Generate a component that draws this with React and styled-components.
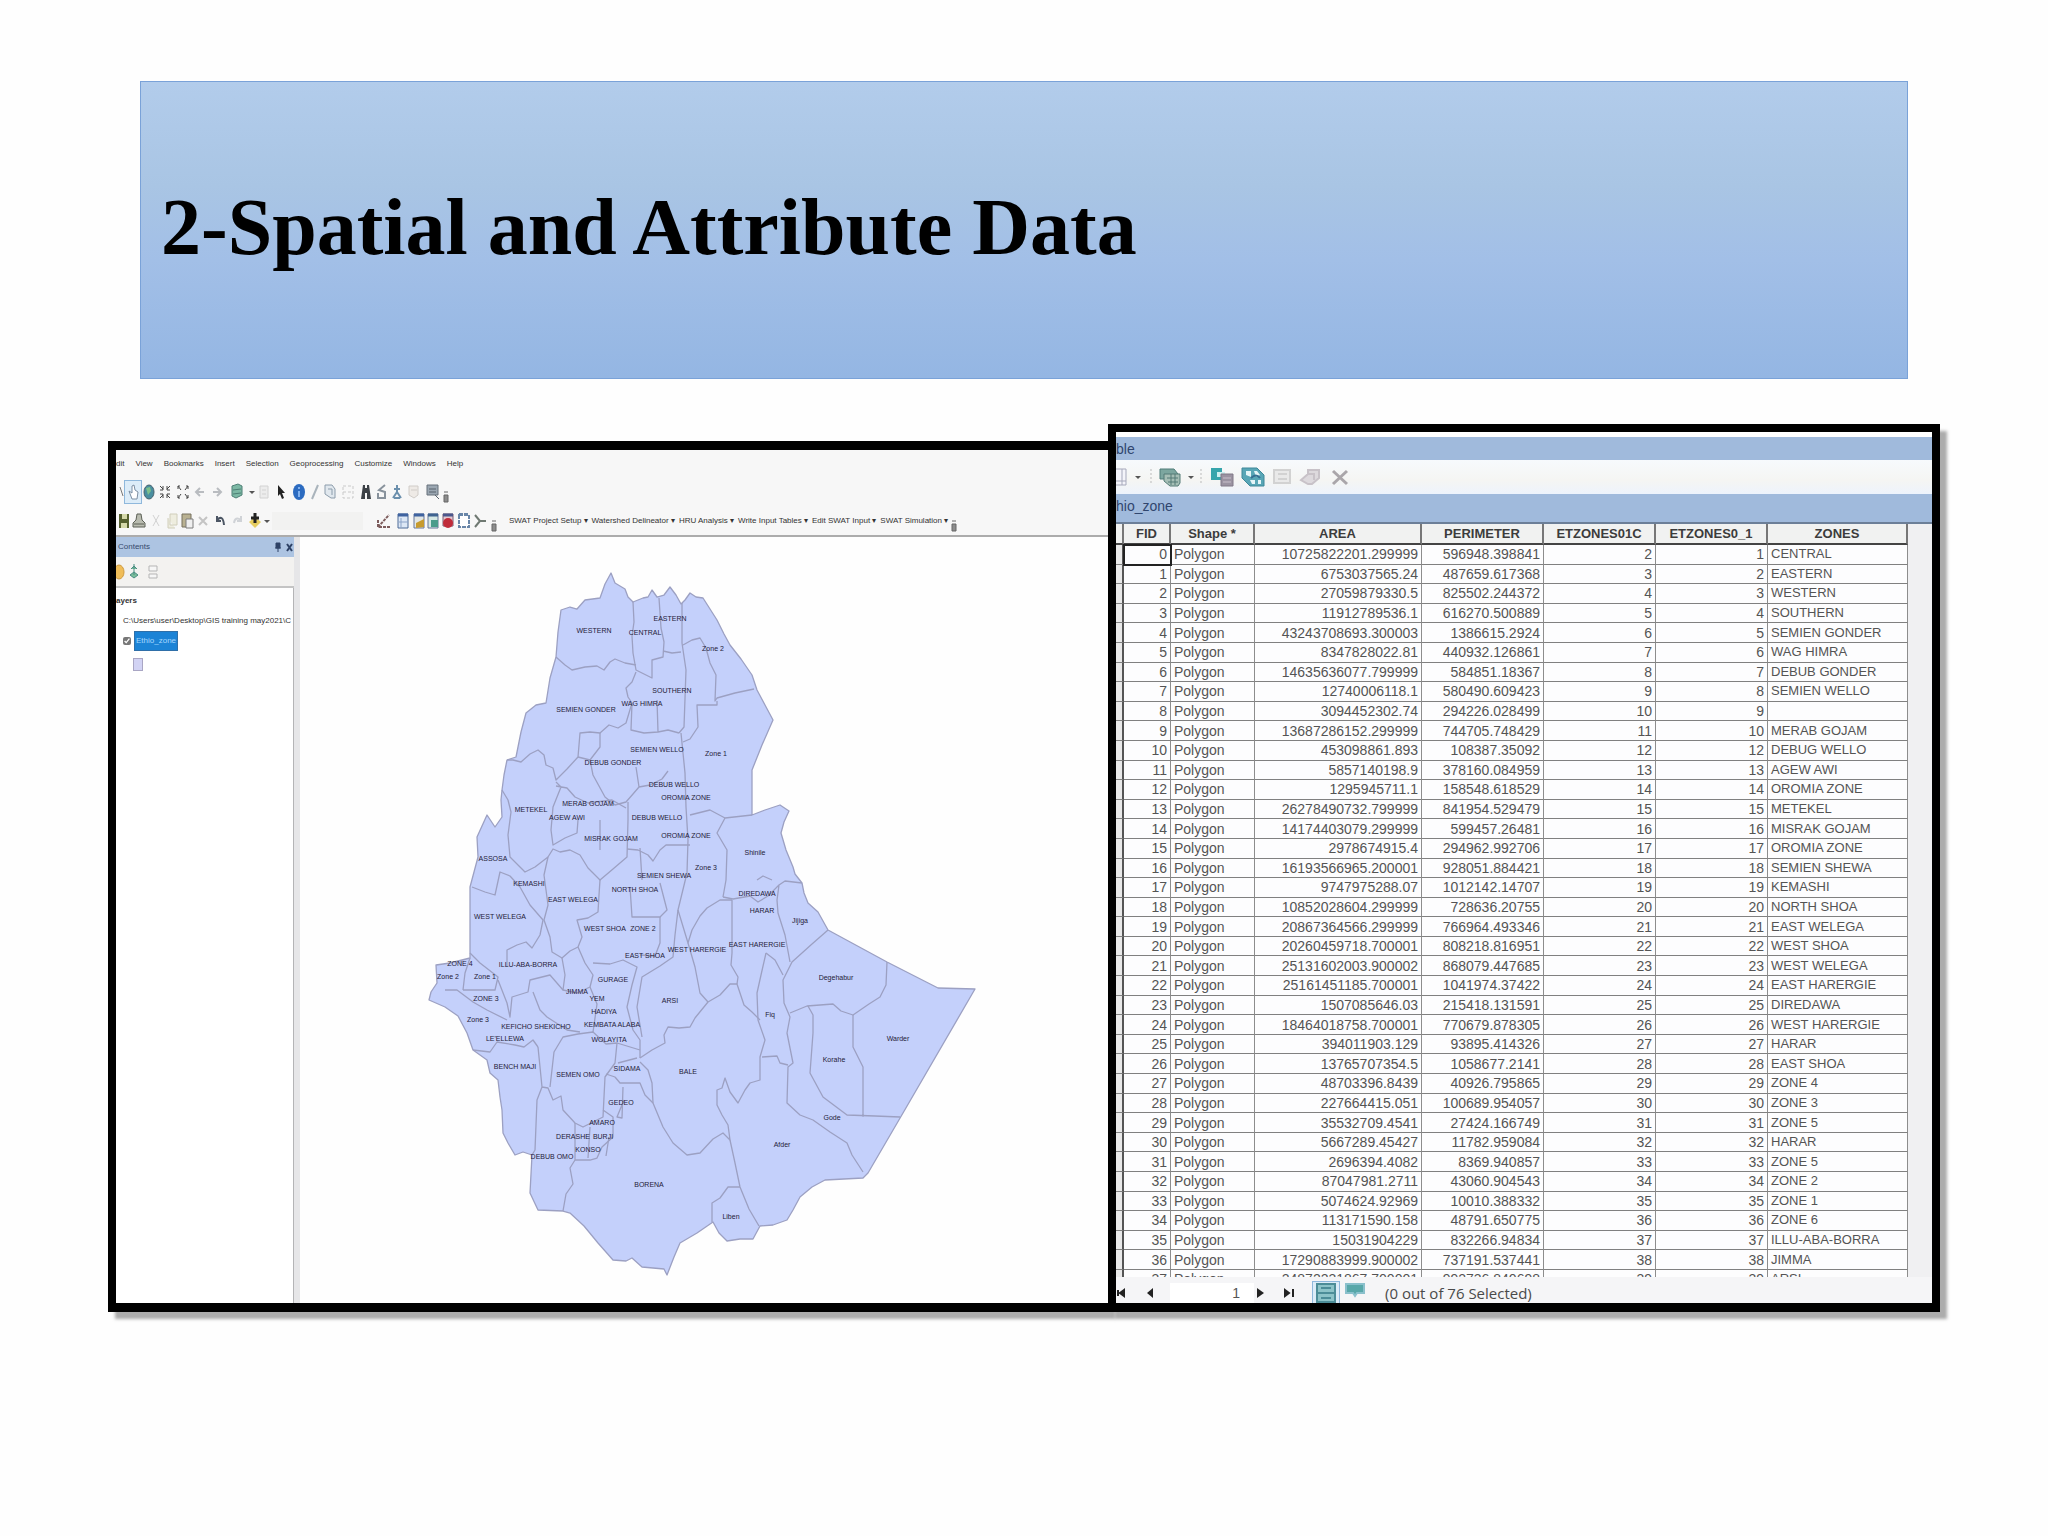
import React from "react"
import styled, { createGlobalStyle } from "styled-components"

const GlobalStyle = createGlobalStyle`
  * {
    box-sizing: border-box;
  }
  body {
    margin: 0;
    background: #fefefe;
  }
  button {
    padding: 0;
    border: 0;
    background: none;
    color: inherit;
    font: inherit;
  }
`

const Slide = styled.main`
  min-height: 100vh;
  padding: 81px 108px 96px;
`

const TitleBand = styled.header`
  display: flex;
  align-items: center;
  height: 298px;
  margin: 0 32px 45px;
  padding: 0 20px 6px;
  border: 1px solid #7aa2d8;
  background: linear-gradient(#b2cceb, #a9c5e4 35%, #a2bfe7 60%, #94b6e3);
`

const Title = styled.h1`
  margin: 0;
  font: bold 80px/90px "Liberation Serif", serif;
  color: #000;
`

const Panels = styled.div`
  display: grid;
  grid-template-columns: 1000fr 832fr;
  align-items: end;
`

const Panel = styled.section`
  min-width: 0;
  overflow: hidden;
  border: 8px solid #000;
  box-shadow: 7px 7px 3px rgba(90, 90, 90, 0.5);
`

const MapPanel = styled(Panel)`
  border-top-width: 9px;
  border-bottom-width: 9px;
  border-right: 0;
  background: #f7f7f7;
  font: 8px/14px "Liberation Sans", sans-serif;
  color: #333;
`

const TablePanel = styled(Panel)`
  border-bottom-width: 9px;
  padding-top: 5px;
  background: #fff;
  font: 14px/18px "Liberation Sans", sans-serif;
  color: #545454;
`

const MenuBar = styled.nav`
  display: flex;
  gap: 11px;
  height: 28px;
  align-items: center;
`

const ToolBar = styled.div`
  display: flex;
  align-items: center;
  height: ${(p) => p.$height}px;
`

const Tool = styled.button`
  display: flex;
  flex: none;
  justify-content: center;
  align-items: center;
  width: ${(p) => p.$width}px;
  height: 24px;
  border: ${(p) => (p.$active ? "1px solid #8fb8dc" : "0")};
  background: ${(p) => (p.$active ? "#dcecf8" : "none")};

  svg {
    flex: none;
    overflow: visible;
  }
`

const ScaleBox = styled.input`
  width: 91px;
  height: 18px;
  margin: 0 11px 0 1px;
  border: 0;
  background: #f2f2f1;
`

const SwatMenus = styled.div`
  display: flex;
  gap: 4px;
  margin-left: 9px;
  white-space: nowrap;
`

const Workspace = styled.div`
  display: grid;
  grid-template-columns: 184px 1fr;
  border-top: 2px solid #acacac;
`

const Contents = styled.aside`
  min-width: 0;
  overflow: hidden;
  background: #fff;
  border-right: 6px solid #e6e6e8;
  box-shadow: inset -1px 0 #b4b4b6;
`

const ContentsHeader = styled.div`
  display: flex;
  justify-content: space-between;
  align-items: center;
  height: 20px;
  padding: 0 2px;
  background: #adc4e2;
  color: #36496c;
`

const HeaderButtons = styled.div`
  display: flex;
  gap: 4px;
`

const LayerTools = styled.div`
  display: flex;
  height: 31px;
  align-items: center;
  background: #f3f2f0;
  border-bottom: 2px solid #c4c4c4;
`

const LayerRow = styled.div`
  display: flex;
  align-items: center;
  gap: 3px;
  height: ${(p) => p.$height || 21}px;
  padding-left: ${(p) => p.$indent || 0}px;
  font-weight: ${(p) => (p.$bold ? "bold" : "normal")};
  white-space: nowrap;

  input {
    width: 8px;
    height: 10px;
    margin: 0;
    accent-color: #777;
  }
`

const LayerName = styled.label`
  padding: 0 1px;
  line-height: 18px;
  border: 1px solid #2f6fa8;
  background: #1b83d6;
  color: #a5d8ff;
`

const Swatch = styled.span`
  width: 10px;
  height: 13px;
  border: 1px solid #a9a6c4;
  background: #d2d3f4;
`

const MapSvg = styled.svg`
  display: block;
  width: 100%;
  background: #fefefe;

  path {
    stroke: #9ca0c2;
    stroke-width: 1.3;
    stroke-linejoin: round;
  }
  text {
    font: 7px "Liberation Sans", sans-serif;
    fill: #1f2038;
    text-anchor: middle;
  }
`

const BlueBar = styled.div`
  height: ${(p) => p.$height}px;
  padding: 2px 0 0;
  line-height: 20px;
  background: #a0badc;
  color: #30466e;
  border-bottom: ${(p) => (p.$ruled ? "2px solid #6c7f98" : "0")};
`

const TableTools = styled(ToolBar)`
  background: linear-gradient(#f7fafd, #f5f5f3 60%, #edf3fc);
`

const Scroller = styled.div`
  height: 753px;
  overflow: hidden;
  padding-right: 24px;
  background: #f0f0f2;
`

const Grid = styled.table`
  width: 100%;
  height: 766px;
  table-layout: fixed;
  border-collapse: separate;
  border-spacing: 0;
  background: #fdfdfe;

  th {
    height: 21px;
    padding: 0;
    font-size: 13px;
    line-height: 16px;
    color: #3c3c3c;
    background: #f1f2f1;
    border-right: 2px solid #777;
    border-bottom: 2px solid #444;
    overflow: hidden;
  }
  td {
    padding: 0 3px;
    line-height: 16px;
    border-right: 1px solid #8d8d8d;
    border-bottom: 1px solid #808080;
    overflow: hidden;
    white-space: nowrap;
  }
  td:first-child {
    border-right: 2px solid #555;
    background: #e9e9e9;
  }
`

const NumberCell = styled.td`
  text-align: right;
  outline: ${(p) => (p.$current ? "2px solid #222" : "none")};
  outline-offset: -1px;
`

const ZoneCell = styled.td`
  font-size: 13px;
`

const Pager = styled.footer`
  display: flex;
  align-items: center;
  height: 26px;
  padding-top: 6px;
  background: #f5f5f7;
  color: #333;
`

const PageBox = styled.input`
  width: 84px;
  height: 20px;
  padding: 0 14px 0 2px;
  border: 0;
  background: #fff;
  color: #555;
  font: inherit;
  text-align: right;
`

const Status = styled.span`
  margin-left: 15px;
  font: 15px/20px "Open Sans", sans-serif;
  color: #4a4a4a;
`

const icons = {
  pointer: <path d="M0 -5L3 4" stroke="#777" />,
  hand: (
    <g fill="#fff" stroke="#7d8fa3">
      <path d="M-4 -1L-1 1V-6L1 -7L2 -2L5 0L4 7H-1Z" />
    </g>
  ),
  globe: (
    <g>
      <ellipse rx="5" ry="7" fill="#4a8fa0" stroke="#46606c" />
      <path d="M-3 -4L1 -5L2 -1L-1 3Z" fill="#7cc08c" />
    </g>
  ),
  zoomIn: <path d="M-5 -6L-2 -3M5 -6L2 -3M-5 6L-2 3M5 6L2 3M-2 -6V-2H-5M2 -6V-2H5M-2 6V2H-5M2 6V2H5" stroke="#444" fill="none" />,
  zoomOut: <path d="M-5 -3V-6H-3M5 -3V-6H3M-5 3V6H-3M5 3V6H3M-5 -6L-2 -2M5 -6L2 -2M-5 6L-2 2M5 6L2 2" stroke="#444" fill="none" />,
  back: <path d="M4 0H-3M0 -4L-4 0L0 4" stroke="#b9bcc0" strokeWidth="2" fill="none" />,
  forward: <path d="M-4 0H3M0 -4L4 0L0 4" stroke="#b9bcc0" strokeWidth="2" fill="none" />,
  layers: (
    <g stroke="#4d7f75" fill="#7cb8a4">
      <path d="M-5 -6L1 -8L5 -6V3L-1 6L-5 4Z" />
      <path d="M-4 -2L4 -3M-4 2L4 1" />
    </g>
  ),
  drop: <path d="M-3 -1H3L0 2Z" fill="#555" />,
  sheet: <path d="M-4 -6H4V6H-4ZM-2 -2H2M-2 2H2" stroke="#d2d2d2" fill="#ececec" />,
  cursor: <path d="M-3 -7L4 1H1L3 6L1 7L-1 2L-3 4Z" fill="#222" />,
  info: (
    <g>
      <ellipse rx="6" ry="8" fill="#2c6bc0" />
      <path d="M0 -5V-3M0 -1V5" stroke="#7fb0ee" strokeWidth="2" />
    </g>
  ),
  slash: <path d="M3 -7L-3 7" stroke="#aab4bc" strokeWidth="2" />,
  popup: <path d="M-5 -7L2 -7L5 -3V6H1L-5 2ZM-2 -3H2V3" stroke="#8c9cab" fill="#e1e8ee" />,
  measure: <path d="M-5 -6H5V6H-5ZM-5 0H5" stroke="#c9c9c9" strokeDasharray="3 2" fill="none" />,
  binoculars: <path d="M-3 -7H-1V-4H1V-7H3L5 7H1V1H-1V7H-5Z" fill="#3c4146" />,
  route: <path d="M3 -7L-3 -2L3 0V6H-4V1" stroke="#88929c" strokeWidth="2" fill="none" />,
  xy: <path d="M0 -7V0L-4 6M0 0L4 6M-3 -3H3M-3 6H3" stroke="#6c90ad" strokeWidth="2" fill="none" />,
  clock: <path d="M-5 -6H4V3L0 6L-5 3ZM-3 -2H3" stroke="#d0ccc8" fill="#eeeae6" />,
  viewer: (
    <g>
      <path d="M-6 -7H5V3H-6Z" fill="#9ba7b2" stroke="#66717b" />
      <path d="M-4 -3H3M-4 0H3M2 3L6 7" stroke="#59636d" />
    </g>
  ),
  grip: <path d="M-2 3H2V10H-2ZM-2 0H2" stroke="#666" fill="#8c8c8c" />,
  save: (
    <g>
      <path d="M-5 -7H5V7H-5Z" fill="#55602f" />
      <path d="M-2 -7H3V-2H-2ZM-3 2H3V7H-3Z" fill="#d4d8a9" />
    </g>
  ),
  print: <path d="M-2 -7H2L3 -1L6 2V6H-6V2L-3 -1ZM-5 3H5" fill="#b9bcb0" stroke="#5c6056" />,
  cut: <path d="M-3 -6L3 5M3 -6L-3 5" stroke="#d2d2d2" />,
  copy: <path d="M-3 -7H4V4H-3ZM-5 -3V7H2" fill="#eeeddf" stroke="#d0cebb" />,
  paste: (
    <g>
      <path d="M-5 -7H4V6H-5Z" fill="#b9b191" stroke="#77715e" />
      <path d="M-1 -2H6V7H-1Z" fill="#efefef" stroke="#7d7d7d" />
    </g>
  ),
  cross: <path d="M-4 -4L4 4M4 -4L-4 4" stroke="#c4c4c4" strokeWidth="2" />,
  undo: <path d="M-3 -5V0H1M-3 -1Q3 -7 4 4" stroke="#4c5664" strokeWidth="2" fill="none" />,
  redo: <path d="M3 -5V0H-1M3 -1Q-3 -5 -4 2" stroke="#d0d3d7" strokeWidth="2" fill="none" />,
  addData: (
    <g>
      <path d="M0 -4L6 1L0 7L-6 1Z" fill="#e6cd61" />
      <path d="M0 -8V2M-4 -3H4" stroke="#222" strokeWidth="3" />
    </g>
  ),
  edit: <path d="M-6 -1V6H6M-6 6L5 -6" stroke="#7d5c5c" strokeWidth="2" strokeDasharray="3 1" fill="none" />,
  win: (
    <g>
      <path d="M-5 -7H5V7H-5Z" fill="#dce7f5" stroke="#4d6a97" />
      <path d="M-5 -6H5" stroke="#3f63a0" strokeWidth="3" />
      <path d="M-2 -3V6M-4 1H5" stroke="#8ba3c8" />
    </g>
  ),
  winYellow: (
    <g>
      <path d="M-5 -7H5V7H-5Z" fill="#e2e6e4" stroke="#66779a" />
      <path d="M-5 -6H5" stroke="#3f63a0" strokeWidth="3" />
      <path d="M-3 2L5 -2V6L-3 7Z" fill="#c79b2e" />
    </g>
  ),
  winGreen: (
    <g>
      <path d="M-5 -7H5V7H-5Z" fill="#d5e8e4" stroke="#66779a" />
      <path d="M-5 -6H5" stroke="#3f6390" strokeWidth="3" />
      <path d="M-2 -1H5V6H-2Z" fill="#4b9c8c" />
    </g>
  ),
  winRed: (
    <g>
      <path d="M-5 -7H5V5H-5Z" fill="#e3c7cf" stroke="#7b5a70" />
      <path d="M-5 -6H5" stroke="#4b588c" strokeWidth="3" />
      <circle cy="2" r="5" fill="#c02c3a" />
    </g>
  ),
  winBlank: <path d="M-5 -6H5V6H-5ZM-5 -7H5" fill="#fff" stroke="#6986a8" strokeWidth="2" strokeDasharray="4 1" />,
  branch: <path d="M-5 -6L0 0L-5 6M0 0H6" stroke="#6f7972" strokeWidth="2" fill="none" />,
  pin: <path d="M-2 -4H2V1H-2ZM0 1V5M-3 1H3" fill="#2e4266" stroke="#2e4266" />,
  close: <path d="M-2 -3L3 4M3 -3L-2 4" stroke="#2e4266" strokeWidth="2" />,
  sun: <ellipse rx="5" ry="7" fill="#f0bd58" stroke="#cf9a3f" />,
  diamond: <path d="M0 -8V3M-3 -3L0 -6L3 -3M-4 3L0 0L4 3L0 6Z" fill="#79bd9a" stroke="#4b8d83" />,
  list: <path d="M-4 -6H4V-1H-4ZM-4 2H4V6H-4Z" fill="#f6f6f6" stroke="#b5b5b5" />,
  options: <path d="M-7 -8H4V8H-7M0 -8V8M-7 4H4" stroke="#a6a9bb" fill="#f4f4fa" />,
  dots: <path d="M0 -8V8" stroke="#bbb" strokeDasharray="2 2" />,
  related: (
    <g>
      <path d="M-10 -8H4L8 -3V2H-10Z" fill="#7ca69f" stroke="#4f7c78" />
      <path d="M-6 -3H10V6L8 9H0L-6 4Z" fill="#a5beb5" stroke="#557b76" />
      <path d="M-3 1H8M-2 5H8M1 -3V8M5 -3V8" stroke="#557b76" />
    </g>
  ),
  select: (
    <g>
      <path d="M-11 -9H0V3H-11Z" fill="#37a5ac" />
      <path d="M-5 -5H3V0H-5Z" fill="#cdf0f0" />
      <path d="M-1 -3H11V9H-1Z" fill="#9b93a1" stroke="#807987" />
      <path d="M1 1H9M1 5H9" stroke="#c8bfca" />
    </g>
  ),
  swap: (
    <g>
      <path d="M-11 -9H4L11 -2V9H-3L-11 1Z" fill="#58a6b6" stroke="#3e8899" />
      <path d="M-7 -6H-2V0L-7 -2ZM1 -6H4L7 -2L3 0ZM-3 3H2V7H-1ZM5 3H8V7H5Z" fill="#e5f5f7" />
      <path d="M-2 1Q3 -4 7 1" stroke="#356f91" strokeWidth="2" />
    </g>
  ),
  clear: <path d="M-8 -7H8V6H-8ZM-4 -3H5M-4 2H5" stroke="#d2d2d2" fill="#e9e9e9" strokeWidth="2" />,
  zoomTo: <path d="M-2 -7H9V1L2 7H-2L-9 3L-2 -3ZM-2 -3H4V3" stroke="#c8c2c8" fill="#ddd9dd" strokeWidth="2" />,
  remove: <path d="M-7 -6L7 7M7 -6L-7 7" stroke="#aaa6aa" strokeWidth="3" />,
  first: <path d="M-5 -3V3M1 -3L-3 0L1 3Z" fill="#222" stroke="#222" strokeWidth="2" />,
  prev: <path d="M3 -5L-3 0L3 5Z" fill="#222" />,
  next: <path d="M-3 -5L4 0L-3 5Z" fill="#222" />,
  last: <path d="M-4 -3L0 0L-4 3ZM4 -4V4" fill="#222" stroke="#222" strokeWidth="2" />,
  allRows: <path d="M-9 -9H9V9H-9ZM-9 0H9M-5 -5H5M-5 5H5" fill="#8cc3c8" stroke="#4c8d98" strokeWidth="2" />,
  selectedRows: <path d="M-9 -9H9V0H2L0 3L-2 0H-9Z" fill="#58a7a9" stroke="#8ac0cc" strokeWidth="2" />,
}

const ToolButton = ({ icon, width, active }) => (
  <Tool type="button" aria-label={icon} $width={width} $active={active}>
    <svg width="2" height="2" viewBox="-1 -1 2 2" fill="none">
      {icons[icon]}
    </svg>
  </Tool>
)

const menus = ["dit", "View", "Bookmarks", "Insert", "Selection", "Geoprocessing", "Customize", "Windows", "Help"]

const swatMenus = [
  "SWAT Project Setup",
  "Watershed Delineator",
  "HRU Analysis",
  "Write Input Tables",
  "Edit SWAT Input",
  "SWAT Simulation",
]

const mapTools = [
  ["pointer", 8],
  ["hand", 18, true],
  ["globe", 14],
  ["zoomIn", 18],
  ["zoomOut", 17],
  ["back", 18],
  ["forward", 16],
  ["layers", 23],
  ["drop", 8],
  ["sheet", 15],
  ["cursor", 19],
  ["info", 18],
  ["slash", 13],
  ["popup", 18],
  ["measure", 18],
  ["binoculars", 17],
  ["route", 15],
  ["xy", 15],
  ["clock", 20],
  ["viewer", 17],
  ["grip", 9],
]

const fileTools = [
  ["save", 15],
  ["print", 16],
  ["cut", 18],
  ["copy", 15],
  ["paste", 14],
  ["cross", 17],
  ["undo", 18],
  ["redo", 17],
  ["addData", 17],
  ["drop", 8],
]

const editTools = [
  ["edit", 20],
  ["win", 17],
  ["winYellow", 15],
  ["winGreen", 14],
  ["winRed", 15],
  ["winBlank", 17],
  ["branch", 16],
  ["grip", 12],
]

const tableTools = [
  ["options", 12],
  ["drop", 20],
  ["dots", 6],
  ["related", 32],
  ["drop", 10],
  ["dots", 10],
  ["select", 32],
  ["swap", 30],
  ["clear", 28],
  ["zoomTo", 28],
  ["remove", 32],
]

const outline =
  "M611 573L615 583L625 589L628 597L633 602L643 598L648 597L652 590L657 597L664 595L670 587L676 595L681 604L685 600L690 593L696 597L703 598L710 609L717 620L724 634L730 645L741 659L752 675L757 690L765 705L773 720L762 745L752 770L752 815L765 810L780 805L789 811L784 822L781 833L786 850L793 867L795 874L802 883L804 893L808 903L818 912L828 930L887 962L938 988L975 989L903 1113L868 1173L863 1178L825 1180L812 1187L800 1197L793 1210L787 1220L773 1225L760 1226L753 1239L740 1239L727 1241L719 1233L713 1222L697 1233L680 1243L674 1257L667 1275L664 1269L642 1267L632 1258L626 1261L613 1260L598 1243L584 1226L570 1213L563 1211L538 1210L530 1193L532 1155L523 1152L515 1155L508 1143L503 1133L502 1110L500 1097L498 1080L490 1073L487 1060L473 1050L467 1033L458 1016L445 1007L429 1000L431 992L437 983L436 965L450 963L470 958L470 887L478 857L477 837L487 815L495 827L502 817L501 800L502 790L504 775L507 760L516 757L521 732L526 713L536 705L546 703L550 678L556 657L558 632L561 610L570 607L577 609L585 600L600 598L605 584Z"

const borders = [
  "M556 657L565 665L572 670L585 667L597 666L604 670L610 662L615 659L625 663L636 665",
  "M633 602L634 622L632 636L633 653L636 670L652 678L652 660L663 657L664 642L661 628L659 598",
  "M663 651L672 653L681 652M682 603V643L686 670L684 727L679 733",
  "M683 645L692 640L700 638L706 648L710 663L716 675L715 701L717 698L735 693L754 689M717 701V705H697L698 727L690 739L683 742",
  "M636 672L632 682L626 688L628 697L632 703L626 723L618 728L609 725L600 733L590 732L580 733L578 757L567 769L556 780L553 768L546 765L544 755L538 750L530 754L521 762L513 760L507 760",
  "M600 733V747L590 760L578 757M632 703L631 730L644 733L658 732L668 730L679 733M657 700L658 732",
  "M590 760L593 775L605 797L615 805L626 802L633 794L639 787L636 767M639 787L650 785L662 779L668 771",
  "M681 733L685 773L686 807L688 840L687 873L678 910L688 943L692 930L700 916L707 908L720 900L732 900",
  "M690 815L710 810L725 818L752 815M725 818L717 833L727 850L726 880L723 897",
  "M556 782L561 787L553 807L551 830L553 845L565 838L577 833L578 820M556 786L567 788L575 797L588 803L612 800L626 808",
  "M502 790L508 800L511 812L508 835L510 857L519 866L525 872L535 867L548 857L553 849L560 852L570 850L580 855L588 868L600 880L613 869L627 857L628 820V802",
  "M600 820V850M472 887L485 892L495 895L500 872L510 876L520 887L530 905L543 920L540 935L532 948L526 942L517 945L507 950L507 967",
  "M548 857L544 875L548 905L544 920L550 937L552 952L562 958L570 951L578 947L582 937L577 920L588 918L598 912L599 895L600 880",
  "M578 947L585 963L593 975L590 987L577 993L563 990L565 975L562 958",
  "M627 849L638 850L648 855L653 861L660 850L666 845L690 845M640 848L642 880M630 887L632 917H660L667 910L660 883",
  "M660 917V943L655 956L640 955M678 910L675 935L673 957L660 966L642 977L637 1007L642 1037",
  "M593 963L610 964L623 960L637 967L632 985L627 1007L633 1030L640 1040V1058M590 987L597 1004L593 1032",
  "M640 1058L652 1050L665 1043L664 1035L668 1027L679 1028L690 1027L695 1018L708 1002L720 995L730 984L737 984L744 1005L752 1012L760 1020",
  "M688 943L695 967L700 993L708 1002M732 900V953L731 965L738 977L737 984",
  "M766 953L761 975L757 993L758 1020L765 1040L760 1057V1080L750 1083L745 1090L738 1103L730 1092L725 1078L722 1088L717 1090L717 1105L722 1115L728 1125L730 1140L723 1133L713 1139L700 1153L687 1155L673 1143L663 1127L653 1103L652 1083L648 1070L640 1062",
  "M730 1140L735 1163L740 1187L749 1209L759 1226M740 1187H728L720 1198L712 1203V1222",
  "M766 953L775 960L783 975M828 930L812 944L792 962L783 980L784 1003L790 1017L787 1033L793 1063L788 1067L787 1103L800 1115L813 1120L830 1132L847 1143L852 1155L863 1172M762 1057L777 1056L780 1063L788 1065",
  "M790 1013L807 1006L833 1004L841 1011L853 1015L869 1004L880 997L886 985L887 962",
  "M808 1006L813 1015L813 1033L810 1073L823 1097L847 1115L875 1116L900 1117M853 1015V1047L863 1067V1117",
  "M802 883L785 881L779 885L777 900L778 913L785 935L790 962M723 897L733 899L750 896L758 902L768 896L779 885M757 880L763 876L772 880",
  "M538 1047L542 1087L537 1100L535 1150L532 1155M542 1087L548 1088L553 1100L561 1096L563 1110L575 1123L583 1127L603 1117L605 1077L615 1063L617 1043L606 1044L593 1032L578 1034L563 1037L554 1052L550 1087",
  "M575 1123V1160L570 1168L573 1184L566 1194L563 1211M575 1160H590L597 1158L602 1147L613 1137V1117L603 1110M590 1127L588 1158",
  "M615 1077L620 1083H640L645 1095L653 1103M623 1087L622 1118L617 1117L624 1100M606 1074L615 1077M609 1137L606 1156",
  "M445 990H457L473 1002L487 1010L507 1020M463 990L465 973L470 958M470 953L480 963L498 977L495 990H463M498 980L507 1003L510 1017L512 997L528 992L530 980L550 975L563 990M533 992L540 1010L547 1017L567 1030L580 1032",
  "M473 1050L490 1052L497 1042L515 1045L524 1047L533 1040L538 1047M637 1058L618 1063M617 1043L640 1050",
]

const places = [
  ["WESTERN", 594, 630],
  ["EASTERN", 670, 618],
  ["CENTRAL", 645, 632],
  ["Zone 2", 713, 648],
  ["SOUTHERN", 672, 690],
  ["WAG HIMRA", 642, 703],
  ["SEMIEN GONDER", 586, 709],
  ["SEMIEN WELLO", 657, 749],
  ["DEBUB GONDER", 613, 762],
  ["Zone 1", 716, 753],
  ["DEBUB WELLO", 674, 784],
  ["OROMIA ZONE", 686, 797],
  ["METEKEL", 531, 809],
  ["MERAB GOJAM", 588, 803],
  ["AGEW AWI", 567, 817],
  ["DEBUB WELLO", 657, 817],
  ["MISRAK GOJAM", 611, 838],
  ["OROMIA ZONE", 686, 835],
  ["ASSOSA", 493, 858],
  ["KEMASHI", 529, 883],
  ["EAST WELEGA", 573, 899],
  ["WEST WELEGA", 500, 916],
  ["NORTH SHOA", 635, 889],
  ["SEMIEN SHEWA", 664, 875],
  ["Zone 3", 706, 867],
  ["Shinile", 755, 852],
  ["DIREDAWA", 757, 893],
  ["HARAR", 762, 910],
  ["Jijiga", 800, 920],
  ["WEST SHOA", 605, 928],
  ["ZONE 2", 643, 928],
  ["EAST SHOA", 645, 955],
  ["WEST HARERGIE", 697, 949],
  ["EAST HARERGIE", 757, 944],
  ["ILLU-ABA-BORRA", 528, 964],
  ["GURAGE", 613, 979],
  ["JIMMA", 577, 991],
  ["YEM", 597, 998],
  ["HADIYA", 604, 1011],
  ["KEMBATA ALABA", 612, 1024],
  ["WOLAYITA", 609, 1039],
  ["ARSI", 670, 1000],
  ["Fiq", 770, 1014],
  ["ZONE 4", 460, 963],
  ["Zone 2", 448, 976],
  ["Zone 1", 485, 976],
  ["ZONE 3", 486, 998],
  ["Zone 3", 478, 1019],
  ["KEFICHO SHEKICHO", 536, 1026],
  ["LE'ELLEWA", 505, 1038],
  ["BENCH MAJI", 515, 1066],
  ["SEMEN OMO", 578, 1074],
  ["SIDAMA", 627, 1068],
  ["BALE", 688, 1071],
  ["GEDEO", 621, 1102],
  ["AMARO", 602, 1122],
  ["DERASHE", 573, 1136],
  ["BURJI", 603, 1136],
  ["KONSO", 588, 1149],
  ["DEBUB OMO", 552, 1156],
  ["BORENA", 649, 1184],
  ["Liben", 731, 1216],
  ["Afder", 782, 1144],
  ["Degehabur", 836, 977],
  ["Warder", 898, 1038],
  ["Korahe", 834, 1059],
  ["Gode", 832, 1117],
]

const columns = [
  ["", 8],
  ["FID", 47],
  ["Shape *", 84],
  ["AREA", 167],
  ["PERIMETER", 122],
  ["ETZONES01C", 112],
  ["ETZONES0_1", 112],
  ["ZONES", 140],
]

// area, perimeter, ETZONES01C, ETZONES0_1, zone name
const rows = [
  ["10725822201.299999", "596948.398841", 2, 1, "CENTRAL"],
  ["6753037565.24", "487659.617368", 3, 2, "EASTERN"],
  ["27059879330.5", "825502.244372", 4, 3, "WESTERN"],
  ["11912789536.1", "616270.500889", 5, 4, "SOUTHERN"],
  ["43243708693.300003", "1386615.2924", 6, 5, "SEMIEN GONDER"],
  ["8347828022.81", "440932.126861", 7, 6, "WAG HIMRA"],
  ["14635636077.799999", "584851.18367", 8, 7, "DEBUB GONDER"],
  ["12740006118.1", "580490.609423", 9, 8, "SEMIEN WELLO"],
  ["3094452302.74", "294226.028499", 10, 9, ""],
  ["13687286152.299999", "744705.748429", 11, 10, "MERAB GOJAM"],
  ["453098861.893", "108387.35092", 12, 12, "DEBUG WELLO"],
  ["5857140198.9", "378160.084959", 13, 13, "AGEW AWI"],
  ["1295945711.1", "158548.618529", 14, 14, "OROMIA ZONE"],
  ["26278490732.799999", "841954.529479", 15, 15, "METEKEL"],
  ["14174403079.299999", "599457.26481", 16, 16, "MISRAK GOJAM"],
  ["2978674915.4", "294962.992706", 17, 17, "OROMIA ZONE"],
  ["16193566965.200001", "928051.884421", 18, 18, "SEMIEN SHEWA"],
  ["9747975288.07", "1012142.14707", 19, 19, "KEMASHI"],
  ["10852028604.299999", "728636.20755", 20, 20, "NORTH SHOA"],
  ["20867364566.299999", "766964.493346", 21, 21, "EAST WELEGA"],
  ["20260459718.700001", "808218.816951", 22, 22, "WEST SHOA"],
  ["25131602003.900002", "868079.447685", 23, 23, "WEST WELEGA"],
  ["25161451185.700001", "1041974.37422", 24, 24, "EAST HARERGIE"],
  ["1507085646.03", "215418.131591", 25, 25, "DIREDAWA"],
  ["18464018758.700001", "770679.878305", 26, 26, "WEST HARERGIE"],
  ["394011903.129", "93895.414326", 27, 27, "HARAR"],
  ["13765707354.5", "1058677.2141", 28, 28, "EAST SHOA"],
  ["48703396.8439", "40926.795865", 29, 29, "ZONE 4"],
  ["227664415.051", "100689.954057", 30, 30, "ZONE 3"],
  ["35532709.4541", "27424.166749", 31, 31, "ZONE 5"],
  ["5667289.45427", "11782.959084", 32, 32, "HARAR"],
  ["2696394.4082", "8369.940857", 33, 33, "ZONE 5"],
  ["87047981.2711", "43060.904543", 34, 34, "ZONE 2"],
  ["5074624.92969", "10010.388332", 35, 35, "ZONE 1"],
  ["113171590.158", "48791.650775", 36, 36, "ZONE 6"],
  ["15031904229", "832266.94834", 37, 37, "ILLU-ABA-BORRA"],
  ["17290883999.900002", "737191.537441", 38, 38, "JIMMA"],
  ["24872231867.700001", "992736.840698", 39, 39, "ARSI"],
]

const renderTools = (tools) =>
  tools.map(([icon, width, active], index) => (
    <ToolButton key={index} icon={icon} width={width} active={active} />
  ))

const ZoneMap = () => (
  <MapSvg viewBox="300 537 808 766" role="img" aria-label="Zones">
    <path d={outline} fill="#c4d0fb" />
    {borders.map((d) => (
      <path key={d} d={d} fill="none" />
    ))}
    {places.map(([name, x, y], index) => (
      <text key={index} x={x} y={y + 3}>
        {name}
      </text>
    ))}
  </MapSvg>
)

const MapWindow = () => (
  <MapPanel>
    <MenuBar>
      {menus.map((name) => (
        <button type="button" key={name}>{name}</button>
      ))}
    </MenuBar>
    <ToolBar $height={28}>{renderTools(mapTools)}</ToolBar>
    <ToolBar $height={29}>
      {renderTools(fileTools)}
      <ScaleBox aria-label="Scale" />
      {renderTools(editTools)}
      <SwatMenus>
        {swatMenus.map((name) => (
          <button type="button" key={name}>{name} ▾</button>
        ))}
      </SwatMenus>
      <ToolButton icon="grip" width={12} />
    </ToolBar>
    <Workspace>
      <Contents>
        <ContentsHeader>
          Contents
          <HeaderButtons>
            <ToolButton icon="pin" width={6} />
            <ToolButton icon="close" width={7} />
          </HeaderButtons>
        </ContentsHeader>
        <LayerTools>
          <ToolButton icon="sun" width={6} />
          <ToolButton icon="diamond" width={24} />
          <ToolButton icon="list" width={14} />
        </LayerTools>
        <LayerRow $bold $height={26}>ayers</LayerRow>
        <LayerRow $height={14} $indent={7}>C:\Users\user\Desktop\GIS training may2021\C</LayerRow>
        <LayerRow $height={26} $indent={7}>
          <input type="checkbox" id="layer" defaultChecked />
          <LayerName htmlFor="layer">Ethio_zone</LayerName>
        </LayerRow>
        <LayerRow $indent={17}>
          <Swatch />
        </LayerRow>
      </Contents>
      <ZoneMap />
    </Workspace>
  </MapPanel>
)

const TableWindow = () => (
  <TablePanel>
    <BlueBar $height={23}>ble</BlueBar>
    <TableTools $height={34}>{renderTools(tableTools)}</TableTools>
    <BlueBar $height={30} $ruled>hio_zone</BlueBar>
    <Scroller>
      <Grid>
        <colgroup>
          {columns.map(([name, width]) => (
            <col key={name} width={width} />
          ))}
        </colgroup>
        <thead>
          <tr>
            {columns.map(([name]) => (
              <th key={name}>{name}</th>
            ))}
          </tr>
        </thead>
        <tbody>
          {rows.map(([area, perimeter, code, zoneId, zone], index) => (
            <tr key={index}>
              <td />
              <NumberCell $current={index === 0}>{index}</NumberCell>
              <td>Polygon</td>
              <NumberCell>{area}</NumberCell>
              <NumberCell>{perimeter}</NumberCell>
              <NumberCell>{code}</NumberCell>
              <NumberCell>{zoneId}</NumberCell>
              <ZoneCell>{zone}</ZoneCell>
            </tr>
          ))}
        </tbody>
      </Grid>
    </Scroller>
    <Pager>
      <ToolButton icon="first" width={14} />
      <ToolButton icon="prev" width={40} />
      <PageBox aria-label="Record" defaultValue="1" />
      <ToolButton icon="next" width={12} />
      <ToolButton icon="last" width={46} />
      <ToolButton icon="allRows" width={28} active />
      <ToolButton icon="selectedRows" width={30} />
      <Status>(0 out of 76 Selected)</Status>
    </Pager>
  </TablePanel>
)

const App = () => (
  <>
    <GlobalStyle />
    <Slide>
      <TitleBand>
        <Title>2-Spatial and Attribute Data</Title>
      </TitleBand>
      <Panels>
        <MapWindow />
        <TableWindow />
      </Panels>
    </Slide>
  </>
)

export default App
